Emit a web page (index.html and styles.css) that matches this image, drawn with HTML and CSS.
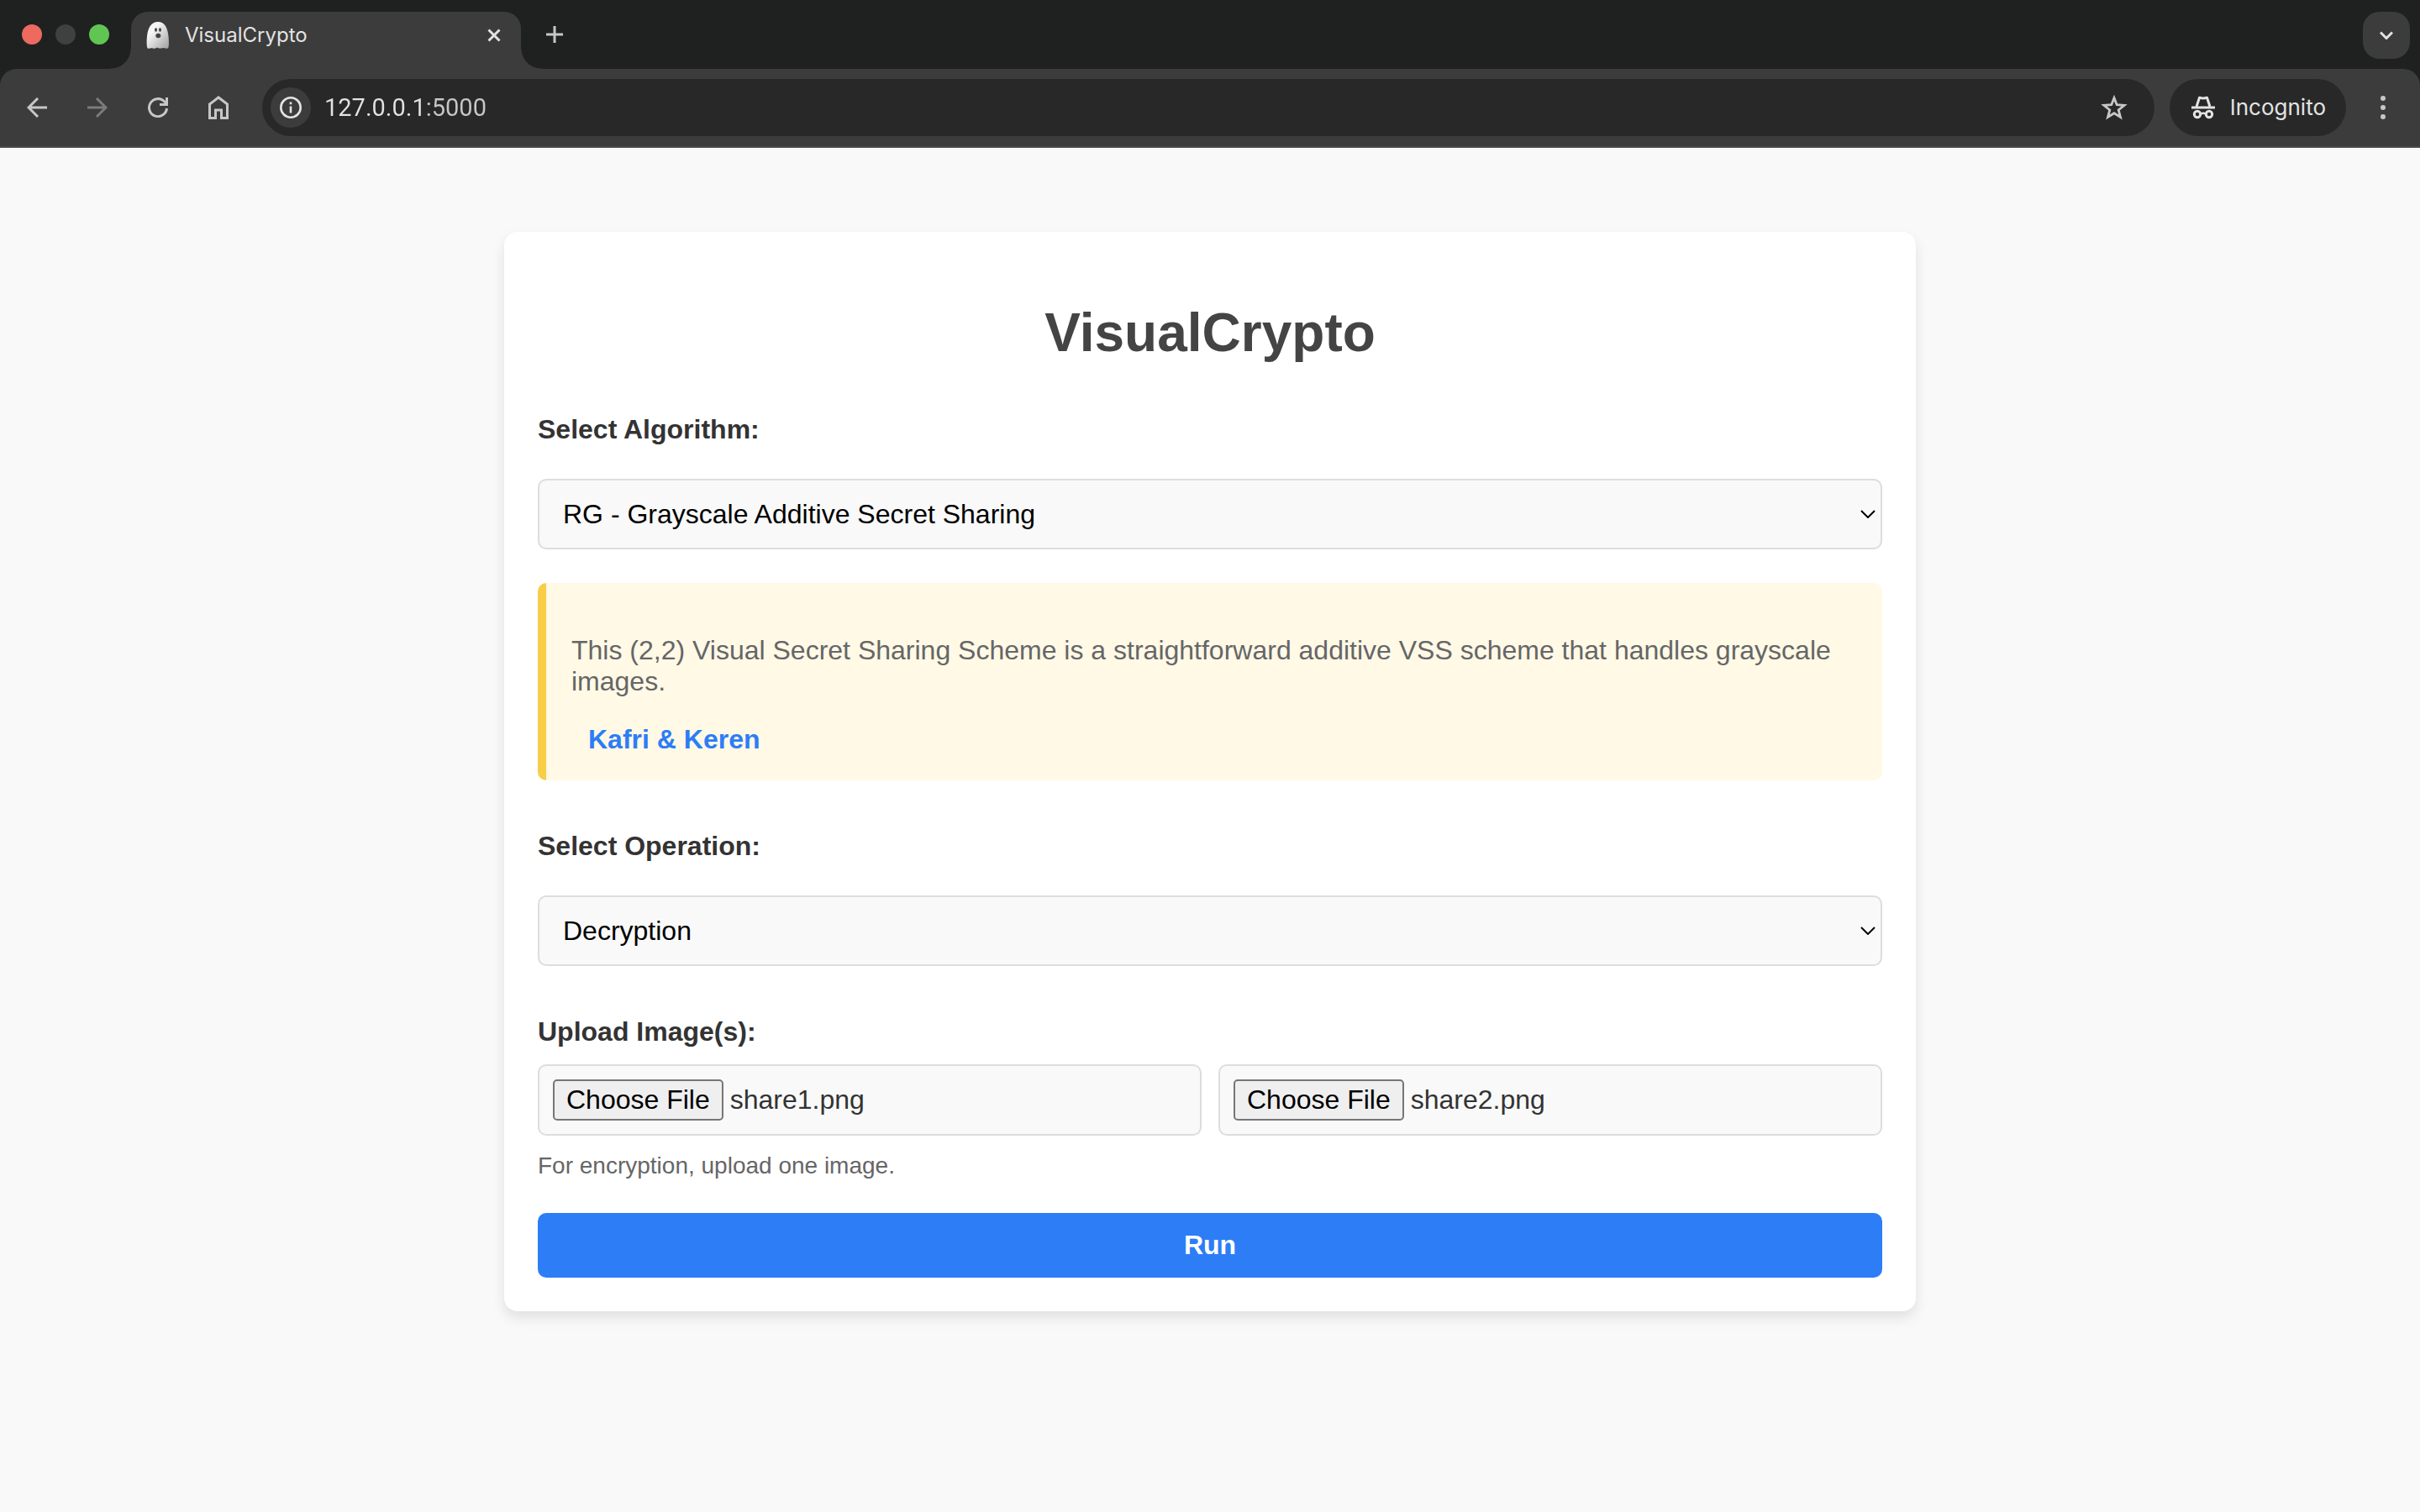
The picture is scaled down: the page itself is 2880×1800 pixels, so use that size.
FILE: index.html
```html
<!DOCTYPE html>
<html lang="en">
<head>
  <meta charset="utf-8">
  <title>VisualCrypto</title>
  <link rel="stylesheet" href="styles.css">
</head>
<body>
  <header class="browser">
    <div class="tab-strip">
      <div class="lights">
        <span class="light light-close"></span>
        <span class="light light-min"></span>
        <span class="light light-max"></span>
      </div>
      <div class="tab">
        <svg class="favicon" viewBox="0 0 32 32" width="32" height="32" aria-hidden="true">
          <defs>
            <linearGradient id="ghost" x1="0" y1="0" x2="1" y2="1">
              <stop offset="0.3" stop-color="#f6f6f6"/>
              <stop offset="1" stop-color="#a0a0a0"/>
            </linearGradient>
          </defs>
          <path fill="url(#ghost)" d="M16 0C8 0 4 7 3 17c-.6 6-.5 10 0 13 .3 2 2 2 3.500 1.500 1.500-.5 2.500-.500 3.500 0s2.500.200 3.500-.300c1-.500 2-.500 3 0s2.500.500 3.500.300 2-.700 3.500-.200 4.500 1 5-1c.6-3 .6-7 0-13C27.500 7 24 0 16 0Z"/>
          <ellipse cx="13.500" cy="9.500" rx="1.500" ry="2.200" fill="#444"/>
          <ellipse cx="18.500" cy="9.500" rx="1.500" ry="2.200" fill="#444"/>
          <ellipse cx="16.300" cy="16.500" rx="3" ry="2.800" fill="#444"/>
        </svg>
        <span class="tab-title">VisualCrypto</span>
        <button class="tab-close" type="button" aria-label="Close tab">
          <svg viewBox="0 0 16 16" width="16" height="16"><path d="M1.500 1.500l13 13M14.500 1.500l-13 13" stroke="currentColor" stroke-width="3"/></svg>
        </button>
      </div>
      <button class="new-tab" type="button" aria-label="New tab">
        <svg viewBox="0 0 20 20" width="20" height="20"><path d="M10 0v20M0 10h20" stroke="currentColor" stroke-width="3"/></svg>
      </button>
      <button class="tab-search" type="button" aria-label="Search tabs">
        <svg viewBox="0 0 16 10" width="16" height="10"><path d="M1 1.500l7 7 7-7" fill="none" stroke="currentColor" stroke-width="3"/></svg>
      </button>
    </div>
    <div class="toolbar">
      <nav class="nav">
        <button class="icon-button" type="button" aria-label="Back">
          <svg viewBox="0 0 24 24" width="24" height="24"><path d="M24 12H2M13 1L2 12l11 11" fill="none" stroke="currentColor" stroke-width="3"/></svg>
        </button>
        <button class="icon-button" type="button" aria-label="Forward" disabled>
          <svg viewBox="0 0 24 24" width="24" height="24"><path d="M0 12h22M11 1l11 11-11 11" fill="none" stroke="currentColor" stroke-width="3"/></svg>
        </button>
        <button class="icon-button" type="button" aria-label="Reload">
          <svg viewBox="0 0 24 24" width="24" height="24"><path d="M22.500 13A10.500 10.500 0 1 1 19.500 4.700l3 3M22.500 0v8.500H14" fill="none" stroke="currentColor" stroke-width="3"/></svg>
        </button>
        <button class="icon-button" type="button" aria-label="Home">
          <svg viewBox="0 0 24 28" width="24" height="28"><path d="M1.500 26.500V10L12 2l10.500 8v16.500h-7V17h-7v9.500Z" fill="none" stroke="currentColor" stroke-width="3"/></svg>
        </button>
      </nav>
      <div class="omnibox">
        <button class="site-info" type="button" aria-label="View site information">
          <svg viewBox="0 0 26 26" width="26" height="26"><circle cx="13" cy="13" r="11.700" fill="none" stroke="currentColor" stroke-width="2.600"/><path d="M13 11.500v8M13 6.500v2.800" stroke="currentColor" stroke-width="2.600"/></svg>
        </button>
        <input class="address" type="text" value="127.0.0.1:5000" aria-label="Address">
        <button class="icon-button" type="button" aria-label="Bookmark this tab">
          <svg viewBox="0 0 32 30" width="32" height="30"><path d="M16 3.500l3.200 8.200 8.900.600-6.900 5.600 2.300 8.600-7.500-4.800-7.500 4.800 2.300-8.600-6.900-5.600 8.900-.600Z" fill="none" stroke="currentColor" stroke-width="2.800"/></svg>
        </button>
      </div>
      <button class="incognito" type="button">
        <svg viewBox="0 0 28 28" width="28" height="28" aria-hidden="true"><path d="M0 12.500h28v3H0Z" fill="currentColor"/><path d="M6 13L9.500 2.200Q14 4 18.500 2.200L22 13" fill="none" stroke="currentColor" stroke-width="3" stroke-linejoin="round"/><circle cx="7" cy="22" r="3.700" fill="none" stroke="currentColor" stroke-width="3"/><circle cx="21" cy="22" r="3.700" fill="none" stroke="currentColor" stroke-width="3"/><path d="M10.500 21.500q3.500-1.500 7 0" fill="none" stroke="currentColor" stroke-width="2.600"/></svg>
        Incognito
      </button>
      <button class="icon-button" type="button" aria-label="Menu">
        <svg viewBox="0 0 6 28" width="6" height="28" fill="currentColor"><circle cx="3" cy="3" r="3"/><circle cx="3" cy="14" r="3"/><circle cx="3" cy="25" r="3"/></svg>
      </button>
    </div>
  </header>

  <main class="card">
    <h1 class="title">VisualCrypto</h1>
    <form class="form">
      <label class="label" for="algorithm">Select Algorithm:</label>
      <select class="select" id="algorithm">
        <option>RG - Grayscale Additive Secret Sharing</option>
      </select>

      <section class="note">
        <p class="note-text">This (2,2) Visual Secret Sharing Scheme is a straightforward additive VSS scheme that handles grayscale images.</p>
        <a class="note-link" href="#">Kafri &amp; Keren</a>
      </section>

      <label class="label" for="operation">Select Operation:</label>
      <select class="select" id="operation">
        <option>Decryption</option>
      </select>

      <label class="label label-upload" for="share1">Upload Image(s):</label>
      <div class="files">
        <input class="file" id="share1" type="file" data-name="share1.png">
        <input class="file" id="share2" type="file" data-name="share2.png" aria-label="Second image">
      </div>
      <p class="hint">For encryption, upload one image.</p>

      <button class="run" type="button">Run</button>
    </form>
  </main>
  <script src="script.js"></script>
</body>
</html>
```
FILE: styles.css
```css
* {
  box-sizing: border-box;
}

body {
  margin: 0;
  background: #f9f9f9;
  color: #333;
  font: 32px/37px "Liberation Sans", Arial, sans-serif;
}

button,
input,
select {
  margin: 0;
  font: inherit;
}

svg {
  display: block;
  flex: none;
}

/* Browser window */

.browser {
  background: #1f2120;
  color: #e3e3e3;
  font: 24px/32px Inter, Roboto, sans-serif;
}

.browser button {
  display: flex;
  align-items: center;
  justify-content: center;
  padding: 0;
  border: 0;
  background: none;
  color: inherit;
}

.tab-strip {
  display: flex;
  align-items: center;
  height: 82px;
  padding: 14px 12px 0 26px;
}

.lights {
  display: flex;
  gap: 16px;
  margin: 0 26px 14px 0;
}

.light {
  width: 24px;
  height: 24px;
  border-radius: 50%;
}

.light-close { background: #ec6a5e; }
.light-min { background: #3f4040; }
.light-max { background: #61c554; }

.tab {
  position: relative;
  display: flex;
  align-items: center;
  gap: 16px;
  width: 464px;
  height: 68px;
  padding: 0 24px 12px 16px;
  border-radius: 20px 20px 0 0;
  background: #3c3c3c;
}

.tab::before,
.tab::after {
  content: "";
  position: absolute;
  bottom: 0;
  width: 24px;
  height: 24px;
}

.tab::before {
  right: 100%;
  background: radial-gradient(circle at 0 0, transparent 23px, #3c3c3c 24px);
}

.tab::after {
  left: 100%;
  background: radial-gradient(circle at 100% 0, transparent 23px, #3c3c3c 24px);
}

.tab-title {
  flex: 1;
}

.new-tab {
  margin: 0 auto 14px 30px;
}

.browser .new-tab {
  color: #c7c7c7;
}

.browser .tab-search {
  width: 56px;
  height: 56px;
  margin-bottom: 12px;
  border-radius: 20px;
  background: #3c3c3c;
}

.toolbar {
  display: flex;
  align-items: center;
  height: 94px;
  padding: 0 16px;
  border-bottom: 2px solid #4a4a4a;
  border-radius: 20px 20px 0 0;
  background: #3c3c3c;
}

.nav {
  display: flex;
  gap: 16px;
}

.browser .icon-button {
  width: 56px;
  height: 56px;
  color: #c7c7c7;
}

.browser .icon-button:disabled {
  color: #7b7b7b;
}

.omnibox {
  display: flex;
  align-items: center;
  flex: 1;
  height: 68px;
  margin: 0 18px 0 24px;
  padding: 0 20px 0 10px;
  border-radius: 34px;
  background: #282828;
}

.browser .site-info {
  width: 48px;
  height: 48px;
  border-radius: 50%;
  background: #3c3c3c;
}

.address {
  flex: 1;
  min-width: 0;
  padding: 0 16px;
  border: 0;
  background: linear-gradient(90deg, #e3e3e3 138px, #c7c7c7 138px);
  background-clip: text;
  color: transparent;
  font-family: Roboto, sans-serif;
  font-size: 29px;
}

.browser .incognito {
  gap: 18px;
  height: 68px;
  margin-right: 16px;
  padding: 0 24px 0 26px;
  border-radius: 34px;
  background: #282828;
  font-size: 26px;
}

/* Page */

.card {
  max-width: 1680px;
  margin: 100px auto;
  padding: 40px;
  border-radius: 16px;
  background: #fff;
  box-shadow: 0 8px 16px rgba(0, 0, 0, 0.1);
}

.title {
  margin: 44px 0 60px;
  color: #444;
  font-size: 64px;
  line-height: 73px;
  text-align: center;
}

.form {
  display: flex;
  flex-direction: column;
}

.label {
  margin-bottom: 40px;
  font-weight: bold;
}

.label-upload {
  margin-bottom: 20px;
}

.select {
  appearance: none;
  height: 84px;
  padding: 0 40px 0 28px;
  border: 2px solid #ddd;
  border-radius: 10px;
  background: #f9f9f9 url("data:image/svg+xml,%3Csvg xmlns='http://www.w3.org/2000/svg' width='18' height='10'%3E%3Cpath d='M1 1l8 8 8-8' fill='none' stroke='%23000' stroke-width='2'/%3E%3C/svg%3E") no-repeat right 6px center;
  color: #000;
}

.note {
  margin-top: 40px;
  padding: 30px;
  border-left: 10px solid #f7ce46;
  border-radius: 10px;
  background: #fff9e6;
}

.note-text {
  margin: 32px 0;
  color: #666;
}

.note-link {
  display: block;
  margin-left: 20px;
  color: #2d7df6;
  font-weight: bold;
  text-decoration: none;
}

.note,
.select {
  margin-bottom: 60px;
}

#algorithm {
  margin-bottom: 0;
}

.files {
  display: grid;
  grid-template-columns: 1fr 1fr;
  gap: 20px;
}

.file {
  min-width: 0;
  height: 85px;
  padding: 16px;
  border: 2px solid #ddd;
  border-radius: 10px;
  background: #f9f9f9;
  color: #333;
}

.file::file-selector-button {
  height: 49px;
  margin: 0 8px 0 0;
  padding: 0 14px;
  border: 2px solid #767676;
  border-radius: 5px;
  background: #efefef;
  color: #000;
  font: inherit;
}

.hint {
  margin: 19px 0 40px;
  color: #666;
  font-size: 28px;
  line-height: 33px;
}

.run {
  height: 77px;
  padding: 0;
  border: 0;
  border-radius: 10px;
  background: #2d7df6;
  color: #fff;
  font-weight: bold;
}
```
FILE: script.js
```js
document.querySelectorAll(".file").forEach((input) => {
  const transfer = new DataTransfer();
  transfer.items.add(new File([""], input.dataset.name, { type: "image/png" }));
  input.files = transfer.files;
});
```
